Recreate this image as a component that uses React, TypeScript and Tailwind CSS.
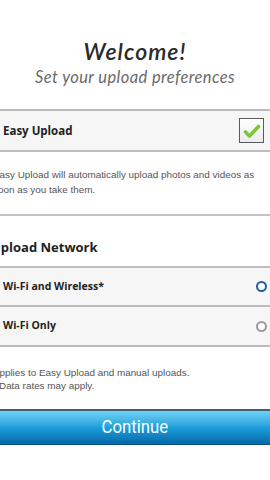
import React from "react";

export default function App() {
  return (
    <div className="w-[270px] h-[480px] bg-white overflow-hidden relative" style={{ fontFamily: '"Liberation Sans", Arial, sans-serif' }}>
      <div className="pt-[37px] text-center">
        <div className="text-[23px] leading-[29px] italic font-semibold text-[#2a2a2a] tracking-[1px]" style={{ fontFamily: 'Lato, sans-serif' }}>Welcome!</div>
        <div className="text-[16.5px] leading-[22px] italic text-[#6a6a6a] tracking-[0.4px]" style={{ fontFamily: 'Lato, sans-serif' }}>Set your upload preferences</div>
      </div>
      <div className="mt-[21px] border-t-2 border-b-2 border-[#bdbdbd] bg-[#f6f6f6] h-[43px] flex items-center justify-between pl-[3px] pr-[6px]">
        <span className="text-[11.5px] font-bold text-[#222]" style={{ fontFamily: '"Open Sans", sans-serif' }}>Easy Upload</span>
        <span className="w-[25px] h-[25px] border-[1.5px] border-[#5a5a5a] bg-gradient-to-b from-white to-[#ececec] flex items-center justify-center">
          <svg width="18" height="16" viewBox="0 0 18 16">
            <path d="M2.5 9 L6.5 13 L15.5 3.5" fill="none" stroke="#7cc540" strokeWidth="3.6" strokeLinecap="round" strokeLinejoin="round" />
          </svg>
        </span>
      </div>
      <div className="h-[62px] pt-[15px] ml-[-7px] text-[9.9px] leading-[15px] text-[#555] whitespace-nowrap">
        <div>Easy Upload will automatically upload photos and videos as</div>
        <div>soon as you take them.</div>
      </div>
      <div className="border-t-2 border-[#c4c4c4] h-[52px] flex items-end pb-[9px]">
        <span className="ml-[-9px] text-[13px] font-bold text-[#222]" style={{ fontFamily: '"Open Sans", sans-serif' }}>Upload Network</span>
      </div>
      <div className="border-t-2 border-[#bdbdbd] bg-[#f6f6f6]">
        <div className="h-[39px] flex items-center justify-between pl-[3px] pr-[3px] border-b-2 border-[#bdbdbd]">
          <span className="text-[10.5px] font-bold text-[#222]" style={{ fontFamily: '"Open Sans", sans-serif' }}>Wi-Fi and Wireless*</span>
          <span className="w-[11px] h-[11px] rounded-full border-[2.5px] border-[#1f5f9c] bg-white"></span>
        </div>
        <div className="h-[40px] flex items-center justify-between pl-[3px] pr-[3px] border-b-2 border-[#bdbdbd]">
          <span className="text-[10.5px] font-bold text-[#222]" style={{ fontFamily: '"Open Sans", sans-serif' }}>Wi-Fi Only</span>
          <span className="w-[11px] h-[11px] rounded-full border-[2.5px] border-[#9a9a9a] bg-white"></span>
        </div>
      </div>
      <div className="h-[62px] pt-[19px] text-[9.9px] leading-[13px] text-[#555] whitespace-nowrap">
        <div className="ml-[-11px]">*Applies to Easy Upload and manual uploads.</div>
        <div className="ml-[-1px]">Data rates may apply.</div>
      </div>
      <div className="h-[36px] border-t-2 border-[#3d6275] bg-gradient-to-b from-[#6ed2f6] via-[#1d9fdc] to-[#0669a8] border-b border-b-[#0a4f7e] flex items-center justify-center">
        <span className="text-white text-[19px] inline-block scale-x-[0.88]" style={{ fontFamily: 'Roboto, sans-serif' }}>Continue</span>
      </div>
    </div>
  );
}
